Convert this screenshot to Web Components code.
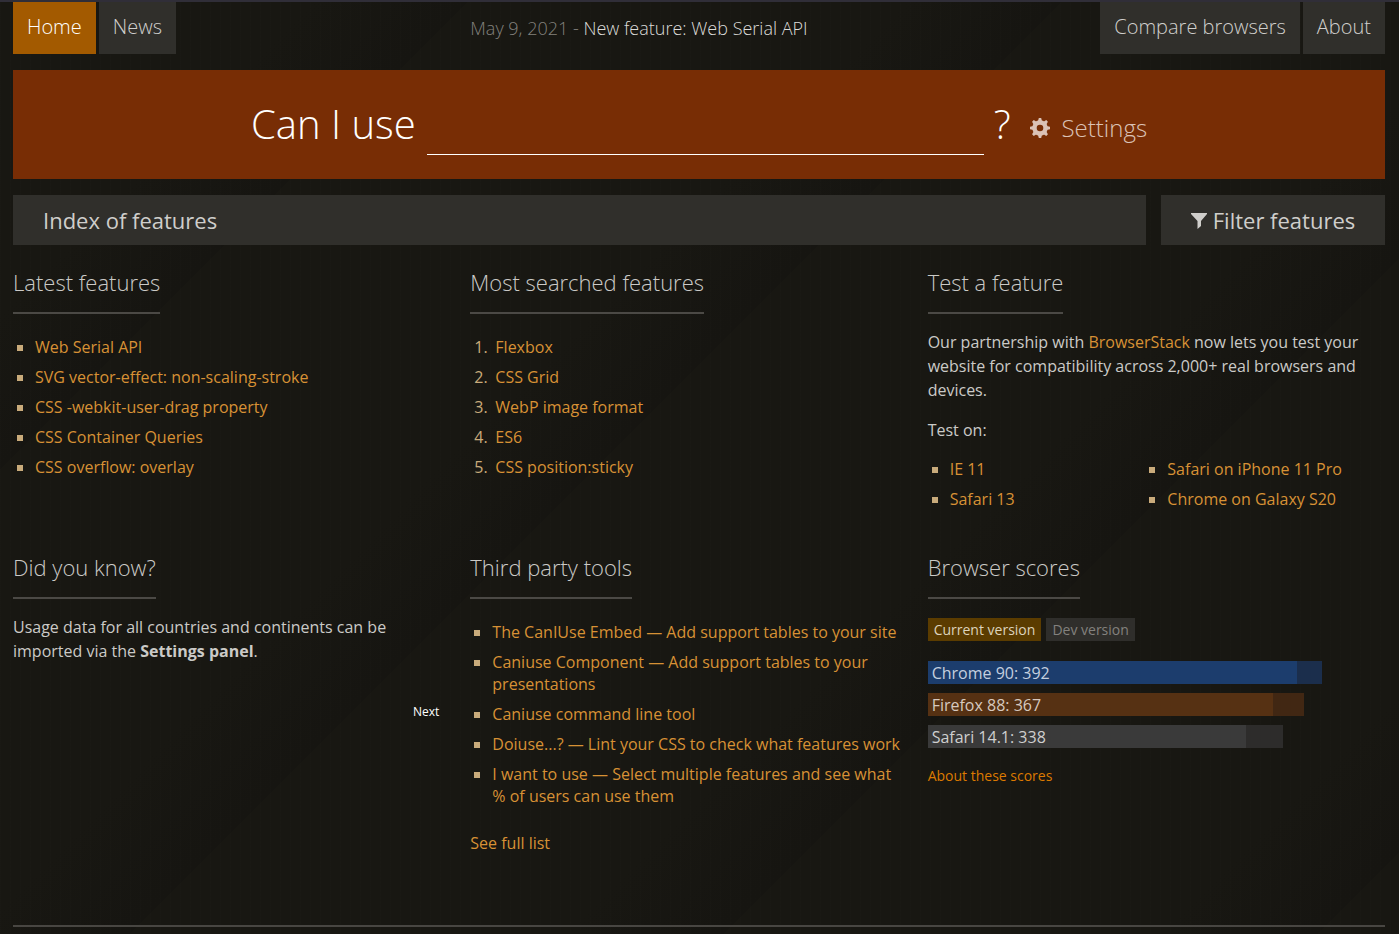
<!DOCTYPE html>
<html lang="en">
<head>
<meta charset="utf-8">
<meta name="viewport" content="width=device-width, initial-scale=1">
<title>Can I use... Support tables for HTML5, CSS3, etc</title>
<style>
  html { background: #191813; }
  body {
    margin: 0;
    font: 16px/24px "Open Sans", "Noto Sans", sans-serif;
    color: #cbcac7;
    --tile: #302f2b;
    --rule: #4b4945;
    --link: #d79135;
    --bullet: #c9ab7b;
  }
</style>
</head>
<body>
<home-page></home-page>

<template id="home-page">
  <style>
    :host {
      display: block;
      min-height: 100vh;
      box-sizing: border-box;
      padding: 0 14px 5px 13px;
      border-top: 2px solid #302e38;
      background:
        repeating-linear-gradient(90deg, #ffffff02 0 1px, transparent 1px 10px),
        repeating-linear-gradient(135deg, #181712 0 220px, #161511 330px, #181712 331px 420px);
    }
    header { display: grid; grid-template-columns: 1fr 1fr 1fr; }
    nav { display: flex; gap: 3px; }
    nav.end { justify-content: flex-end; }
    .latest { font-size: 18px; line-height: 52px; font-weight: 300; color: #83817d; white-space: nowrap; }
    .latest a { color: #dddcd9; text-decoration: none; }
    .index { display: grid; grid-template-columns: 1fr 224px; gap: 15px; margin-top: 16px; }
    main {
      display: grid;
      grid-template-columns: repeat(3, minmax(0, 1fr));
      row-gap: 43px;
      margin-top: 23px;
    }
    p { margin: 16px 0 0; }
    a { color: var(--link); text-decoration: none; }
    .devices { display: grid; grid-template-columns: 1fr 1fr; column-gap: 4px; }
    .devices link-list { margin-top: 16px; }
    .next {
      display: block;
      margin: 40px 5px 0 auto;
      padding: 0;
      border: 0;
      background: none;
      color: #fff;
      font: 12px/18px "Open Sans", "Noto Sans", sans-serif;
    }
    .versions { display: flex; gap: 5px; margin: 19px 0 20px; }
    .small { font-size: 14px; margin-top: 16px; }
    .small a { color: #dc7a00; }
    .more { margin-top: 24px; }
    footer { margin-top: 70px; border-top: 2px solid #484642; }
  </style>
  <header>
    <nav aria-label="Main">
      <nav-tab href="#home" current>Home</nav-tab>
      <nav-tab href="#news">News</nav-tab>
    </nav>
    <div class="latest">May 9, 2021 - <a href="#serial">New feature: Web Serial API</a></div>
    <nav class="end" aria-label="More">
      <nav-tab href="#compare">Compare browsers</nav-tab>
      <nav-tab href="#about">About</nav-tab>
    </nav>
  </header>
  <search-hero></search-hero>
  <div class="index">
    <index-button>Index of features</index-button>
    <index-button center>
      <svg slot="icon" width="16" height="16" viewBox="0 0 16 16" fill="currentColor" aria-hidden="true"><path d="M0 0h16v1L10 8v5l-3.500 3V8L0 1z"/></svg>
      Filter features
    </index-button>
  </div>
  <main>
    <feature-panel heading="Latest features">
      <link-list>
        <a href="#f1">Web Serial API</a>
        <a href="#f2">SVG vector-effect: non-scaling-stroke</a>
        <a href="#f3">CSS -webkit-user-drag property</a>
        <a href="#f4">CSS Container Queries</a>
        <a href="#f5">CSS overflow: overlay</a>
      </link-list>
    </feature-panel>
    <feature-panel heading="Most searched features">
      <link-list ordered>
        <a href="#s1">Flexbox</a>
        <a href="#s2">CSS Grid</a>
        <a href="#s3">WebP image format</a>
        <a href="#s4">ES6</a>
        <a href="#s5">CSS position:sticky</a>
      </link-list>
    </feature-panel>
    <feature-panel heading="Test a feature">
      <p>Our partnership with <a href="#bs">BrowserStack</a> now lets you test your website for compatibility across 2,000+ real browsers and devices.</p>
      <p>Test on:</p>
      <div class="devices">
        <link-list>
          <a href="#ie">IE 11</a>
          <a href="#safari">Safari 13</a>
        </link-list>
        <link-list>
          <a href="#iphone">Safari on iPhone 11 Pro</a>
          <a href="#galaxy">Chrome on Galaxy S20</a>
        </link-list>
      </div>
    </feature-panel>
    <feature-panel heading="Did you know?">
      <p>Usage data for all countries and continents can be imported via the <strong>Settings panel</strong>.</p>
      <button class="next" type="button">Next</button>
    </feature-panel>
    <feature-panel heading="Third party tools">
      <link-list>
        <a href="#t1">The CanIUse Embed — Add support tables to your site</a>
        <a href="#t2">Caniuse Component — Add support tables to your presentations</a>
        <a href="#t3">Caniuse command line tool</a>
        <a href="#t4">Doiuse...? — Lint your CSS to check what features work</a>
        <a href="#t5">I want to use — Select multiple features and see what % of users can use them</a>
      </link-list>
      <p class="more"><a href="#tools">See full list</a></p>
    </feature-panel>
    <feature-panel heading="Browser scores">
      <div class="versions">
        <version-button current>Current version</version-button>
        <version-button>Dev version</version-button>
      </div>
      <score-bar score="392" partial="419" style="--full:#1c3d6d;--part:#1b2e4c;--ink:#c4cfdf">Chrome 90: 392</score-bar>
      <score-bar score="367" partial="400" style="--full:#563113;--part:#412713;--ink:#d7c9bf">Firefox 88: 367</score-bar>
      <score-bar score="338" partial="377" style="--full:#3a3a3a;--part:#2d2c2b;--ink:#cfcfcf">Safari 14.1: 338</score-bar>
      <p class="small"><a href="#scores">About these scores</a></p>
    </feature-panel>
  </main>
  <footer></footer>
</template>

<template id="nav-tab">
  <style>
    :host { display: block; background: var(--tile); color: #d0cfcd; }
    :host([current]) { background: #a35a00; color: #fff; }
    a { display: block; padding: 0 14px 2px; font-size: 20px; line-height: 50px; font-weight: 300; color: inherit; text-decoration: none; white-space: nowrap; }
  </style>
  <a><slot></slot></a>
</template>

<template id="search-hero">
  <style>
    :host { display: block; margin-top: 16px; background: #782d05; color: #fff; font-weight: 300; }
    form { display: flex; justify-content: center; align-items: center; height: 109px; }
    label, .mark { padding-bottom: 2px; font-size: 40px; line-height: 56px; white-space: nowrap; }
    input {
      flex: 0 1 557px;
      min-width: 0;
      height: 61px;
      box-sizing: border-box;
      margin: 0 10px 0 11px;
      padding: 0 4px;
      border: 0;
      border-bottom: 1px solid #fff;
      border-radius: 0;
      outline: 0;
      background: none;
      color: inherit;
      font: 300 40px "Open Sans", "Noto Sans", sans-serif;
    }
    button {
      display: flex;
      align-items: center;
      gap: 11px;
      margin: 6px 0 0 20px;
      padding: 0;
      border: 0;
      background: none;
      color: #dbc2b6;
      font: 300 24px/36px "Open Sans", "Noto Sans", sans-serif;
    }
  </style>
  <form>
    <label for="q">Can I use</label>
    <input id="q" type="text" autocomplete="off">
    <span class="mark">?</span>
    <button type="button">
      <svg width="20" height="20" viewBox="0 0 20 20" aria-hidden="true">
        <g fill="currentColor">
          <path fill-rule="evenodd" d="M10 2.300a7.700 7.700 0 1 0 0 15.400a7.700 7.700 0 1 0 0-15.400zM10 6.700a3.300 3.300 0 1 1 0 6.600a3.300 3.300 0 1 1 0-6.600z"/>
          <path id="tooth" d="M8.800 0h2.400l.9 3.500H7.900z"/>
          <use href="#tooth" transform="rotate(45 10 10)"/><use href="#tooth" transform="rotate(90 10 10)"/>
          <use href="#tooth" transform="rotate(135 10 10)"/><use href="#tooth" transform="rotate(180 10 10)"/>
          <use href="#tooth" transform="rotate(225 10 10)"/><use href="#tooth" transform="rotate(270 10 10)"/>
          <use href="#tooth" transform="rotate(315 10 10)"/>
        </g>
      </svg>
      Settings
    </button>
  </form>
</template>

<template id="index-button">
  <style>
    :host { display: block; }
    button {
      display: flex;
      align-items: center;
      gap: 6px;
      width: 100%;
      height: 50px;
      padding: 0 30px;
      border: 0;
      background: var(--tile);
      color: #cfcecb;
      font: 22px/30px "Open Sans", "Noto Sans", sans-serif;
      white-space: nowrap;
    }
    :host([center]) button { justify-content: center; padding: 0; }
    ::slotted(svg) { display: block; margin-top: 2px; }
  </style>
  <button type="button"><slot name="icon"></slot><span><slot></slot></span></button>
</template>

<template id="feature-panel">
  <style>
    :host { display: block; padding-right: 26px; }
    h2 {
      width: fit-content;
      margin: 0;
      padding-bottom: 16px;
      border-bottom: 2px solid var(--rule);
      font-size: 22px;
      line-height: 28px;
      font-weight: 300;
    }
  </style>
  <h2></h2>
  <slot></slot>
</template>

<template id="link-list">
  <style>
    :host { display: block; margin-top: 22px; }
    ul, ol { display: grid; gap: 8px; margin: 0; padding: 0; list-style: none; line-height: 22px; }
    li { display: grid; grid-template-columns: 22px 1fr; }
    ol li { grid-template-columns: 25px 1fr; }
    .square { width: 6px; height: 6px; margin: 9px 0 0 4px; background: var(--bullet); }
    .number { margin-left: 4px; color: var(--bullet); }
  </style>
</template>

<template id="version-button">
  <style>
    :host { display: block; }
    button {
      display: block;
      height: 23px;
      padding: 0 6px;
      border: 0;
      background: #2f2e2b;
      color: #83817e;
      font: 14px/23px "Open Sans", "Noto Sans", sans-serif;
    }
    :host([current]) button { background: #5b3c00; color: #ddd3bc; }
  </style>
  <button type="button"><slot></slot></button>
</template>

<template id="score-bar">
  <style>
    :host { display: block; }
    :host(:not(:first-of-type)) { margin-top: 9px; }
    .partial { background: var(--part); }
    .full { box-sizing: border-box; height: 23px; padding-left: 4px; background: var(--full); color: var(--ink); line-height: 24px; white-space: nowrap; }
  </style>
  <div class="partial"><div class="full"><slot></slot></div></div>
</template>

<script>
  class TemplateElement extends HTMLElement {
    constructor() {
      super();
      const template = document.getElementById(this.localName);
      this.attachShadow({ mode: 'open' }).append(template.content.cloneNode(true));
    }
  }

  customElements.define('nav-tab', class extends TemplateElement {
    connectedCallback() {
      const link = this.shadowRoot.querySelector('a');
      link.href = this.getAttribute('href');
      if (this.hasAttribute('current')) link.setAttribute('aria-current', 'page');
    }
  });

  customElements.define('feature-panel', class extends TemplateElement {
    connectedCallback() {
      this.shadowRoot.querySelector('h2').textContent = this.getAttribute('heading');
    }
  });

  /* Wraps each slotted link in its own list item. */
  customElements.define('link-list', class extends TemplateElement {
    connectedCallback() {
      if (this.shadowRoot.querySelector('li')) return;
      const ordered = this.hasAttribute('ordered');
      const list = document.createElement(ordered ? 'ol' : 'ul');
      [...this.children].forEach((link, i) => {
        link.slot = 'item-' + i;
        const item = document.createElement('li');
        const marker = document.createElement('span');
        marker.className = ordered ? 'number' : 'square';
        if (ordered) marker.textContent = (i + 1) + '.';
        const body = document.createElement('div');
        const slot = document.createElement('slot');
        slot.name = link.slot;
        body.append(slot);
        item.append(marker, body);
        list.append(item);
      });
      this.shadowRoot.append(list);
    }
  });

  /* Bars are drawn against a full score of 458 points. */
  customElements.define('score-bar', class extends TemplateElement {
    connectedCallback() {
      const score = Number(this.getAttribute('score'));
      const partial = Number(this.getAttribute('partial'));
      this.shadowRoot.querySelector('.partial').style.width = `calc(100% * ${partial} / 458)`;
      this.shadowRoot.querySelector('.full').style.width = `calc(100% * ${score} / ${partial})`;
    }
  });

  for (const name of ['search-hero', 'index-button', 'version-button', 'home-page']) {
    customElements.define(name, class extends TemplateElement {});
  }
</script>
</body>
</html>
